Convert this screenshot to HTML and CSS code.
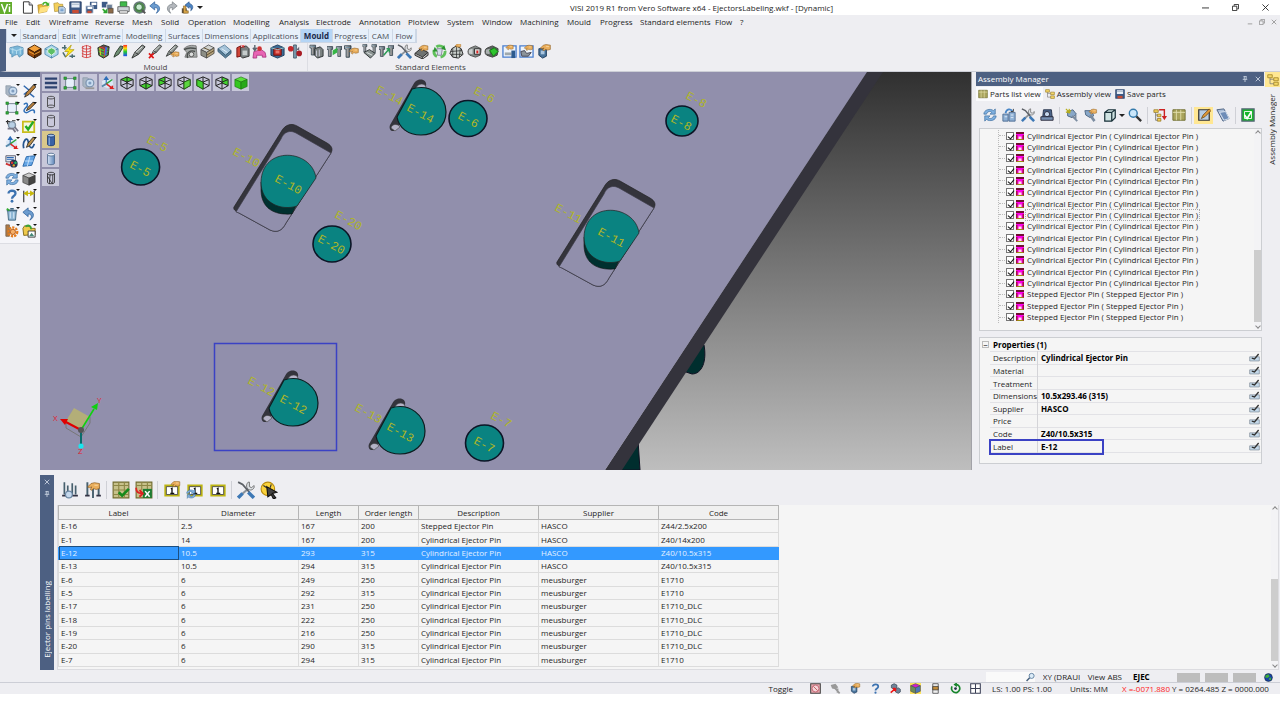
FILE: index.html
```
<!DOCTYPE html>
<html lang="en">
<head>
    <meta charset="UTF-8">
    <meta name="viewport" content="width=device-width, initial-scale=1.0">
    <title>VISI 2019 R1 - EjectorsLabeling.wkf</title>
    <link rel="stylesheet" href="styles.css">
</head>
<body>
    <svg class="sprite" aria-hidden="true">
        <defs>
            <linearGradient id="gBlue" x1="0" x2="1"><stop offset="0" stop-color="#d3e2f5"/><stop offset="1" stop-color="#5f86b8"/></linearGradient>
            <linearGradient id="gGrey" x1="0" x2="1"><stop offset="0" stop-color="#ddd"/><stop offset="1" stop-color="#555"/></linearGradient>
            <linearGradient id="gRain" x1="0" x2="0" y1="0" y2="1"><stop offset="0" stop-color="#f22"/><stop offset=".3" stop-color="#fd0"/><stop offset=".6" stop-color="#2c3"/><stop offset="1" stop-color="#24f"/></linearGradient>
        </defs>
        <!-- shared parts -->
        <symbol id="hand" viewBox="0 0 16 16"><path d="M1 7L5 3L9 2L15 3V9L11 10L8 9L6 11L4 10L6 7L3 8Z" fill="#eaae5c" stroke="#8a5a1c" stroke-width=".8"/><path d="M9 5H13" stroke="#fbe0b0"/></symbol>
        <symbol id="screw" viewBox="0 0 16 16"><path d="M4 1H12V5H10V15H6V5H4Z" fill="url(#gGrey)" stroke="#263844" stroke-width="1"/><path d="M5 3H11" stroke="#6a90a8"/></symbol>
        <symbol id="cubewire" viewBox="0 0 16 16"><path d="M8 1L15 4V11L8 15L1 11V4ZM1 4L8 7L15 4M8 7V15M8 1V8L1 11M8 8L15 11" fill="none" stroke="#222" stroke-width="1.1"/></symbol>
        <!-- title bar -->
        <symbol id="new" viewBox="0 0 16 16"><path d="M3 1H10L14 5V15H3Z" fill="#fff" stroke="#333" stroke-width="1.2"/><path d="M10 1V5H14" fill="#ccd" stroke="#333"/></symbol>
        <symbol id="open" viewBox="0 0 16 16"><path d="M1 5L6 4L7 6L13 5L12 13L2 15Z" fill="#e8b73a" stroke="#9a7213" stroke-width=".7"/><path d="M4 8L16 6L12 13L2 15Z" fill="#ffe283"/><path d="M6 4C8 0 12 0 14 3L15 1V6L10 5L12 4C10 2 9 3 8 5Z" fill="#43b02a"/></symbol>
        <symbol id="folder" viewBox="0 0 16 16"><path d="M1 3L6 2L8 4H12V12L2 13Z" fill="#f3cf5c" stroke="#a5831e" stroke-width=".7"/><path d="M7 7H13L15 9V15H7Z" fill="#cfe0f2" stroke="#456" stroke-width=".8"/><path d="M9 10H13M9 12H13" stroke="#3f78b8"/></symbol>
        <symbol id="save" viewBox="0 0 16 16"><path d="M1 1H15V15H1Z" fill="#3c5a86" stroke="#223a60"/><path d="M3 2H13V8H3Z" fill="#e8eef6"/><path d="M4 11H12V15H4Z" fill="#c84c33"/><path d="M3 4H13" stroke="#9ab"/></symbol>
        <symbol id="saveall" viewBox="0 0 16 16"><path d="M6 1H15V10H6Z" fill="#3c5a86"/><path d="M8 2H14V5H8Z" fill="#fff"/><path d="M1 6H10V15H1Z" fill="#3c5a86" stroke="#dfe6ef"/><path d="M3 7H9V10H3Z" fill="#fff"/><path d="M3 12H8V15H3Z" fill="#c84c33"/></symbol>
        <symbol id="export" viewBox="0 0 16 16"><path d="M1 1H8V8H1Z" fill="#3c5a86"/><path d="M7 4H14V11H7Z" fill="#6b7f98" stroke="#eee"/><path d="M9 9H15V15H9Z" fill="#8c6a48" stroke="#333" stroke-width=".6"/><path d="M2 10L7 14M7 10V14H3" stroke="#2fa62f" stroke-width="2" fill="none"/></symbol>
        <symbol id="printer" viewBox="0 0 16 16"><path d="M4 1H12V8H4Z" fill="#3fb94b" stroke="#24762c"/><path d="M1 7H15V13H1Z" fill="#ccd2d8" stroke="#555"/><path d="M3 12H13V15H3Z" fill="#eee" stroke="#666"/></symbol>
        <symbol id="zoomfit" viewBox="0 0 16 16"><circle cx="8" cy="8" r="7" fill="#4f8c4a" stroke="#6c7880" stroke-width="1.4"/><circle cx="7.500" cy="7.500" r="4" fill="#c8ead0" stroke="#2c5c34"/><path d="M11 11L15 15" stroke="#555" stroke-width="2.400"/></symbol>
        <symbol id="undo" viewBox="0 0 16 16"><path d="M1 6L7 1V4C13 4 16 11 9 15C12 11 11 8 7 8V11Z" fill="#6c9ccf" stroke="#31629c" stroke-width=".9"/></symbol>
        <symbol id="redo" viewBox="0 0 16 16"><path d="M15 6L9 1V4C3 4 0 11 7 15C4 11 5 8 9 8V11Z" fill="#b4b8bd" stroke="#7c8288" stroke-width=".9"/></symbol>
        <symbol id="undohouse" viewBox="0 0 16 16"><path d="M5 5L10 1V3C15 4 16 9 12 12C13 9 12 7 10 7V9Z" fill="#4d85c4" stroke="#234f86" stroke-width=".8"/><path d="M1 9H7V15H1Z" fill="#5c5040"/><path d="M3 6H6V12H9V15H3Z" fill="#d9a649" stroke="#6a4b14" stroke-width=".6"/></symbol>
        <!-- mould ribbon -->
        <symbol id="blockblue" viewBox="0 0 16 16"><path d="M1 4L9 2L15 4V11L11 14L9 11L6 12L3 14V11L1 10Z" fill="#7ab6d8" stroke="#4d88ad" stroke-width=".8"/><path d="M1 5L8 7L15 5M8 7V11M4 4V10M12 4V11" stroke="#b9dff0" fill="none"/></symbol>
        <symbol id="blockorange" viewBox="0 0 16 16"><path d="M1 5L8 1L15 5L8 9Z" fill="#f3a03a" stroke="#4a2404"/><path d="M1 5V11L8 15V9Z" fill="#a24f0c" stroke="#3a1c04"/><path d="M15 5V11L8 15V9Z" fill="#5d2c07" stroke="#3a1c04"/><path d="M2 8L8 11L14 8" stroke="#f2a63c" fill="none"/></symbol>
        <symbol id="blockgreen" viewBox="0 0 16 16"><path d="M1 5L8 1L15 5V11L8 15L1 11Z" fill="#a9d3ea" stroke="#5a93b5"/><path d="M1 5L8 9L15 5M8 9V15" stroke="#4d88ad" fill="none"/><path d="M4 6L8 4L12 6V9L8 12L4 9Z" fill="#5cbf66" stroke="#e6f6e6"/></symbol>
        <symbol id="bolt" viewBox="0 0 16 16"><path d="M4 1V6M1 4H6M12 11V15M9 13H15M2 9L5 14" stroke="#4b6c70" stroke-width="1.6"/><path d="M11 1L4 8H8L5 14L14 6H9Z" fill="#ffe818" stroke="#a89404" stroke-width=".7"/></symbol>
        <symbol id="coil" viewBox="0 0 16 16"><path d="M4 2V14M12 2V14M8 1V15" stroke="#c22" stroke-width=".8"/><path d="M3 4C6 1 10 1 13 4C10 6 6 6 3 4M3 7C6 9 10 9 13 7M3 10C6 12 10 12 13 10M3 13C6 15 10 15 13 13" stroke="#d43c3c" fill="none" stroke-width=".9"/></symbol>
        <symbol id="mesh" viewBox="0 0 16 16"><path d="M2 4L8 1L14 3L13 12L8 15L3 12Z" fill="#6d4a4c" stroke="#232"/><path d="M3 5L8 7L13 5M3 8L8 10L13 8M4 11L8 13L12 11" stroke="#3ecf3a" stroke-width="1.3" fill="none"/><path d="M4 3L9 5V14" stroke="#e8402a" fill="none"/><path d="M11 3L10 12" stroke="#4a68e0" stroke-width="2"/><path d="M4 4L5 12" stroke="#e8d22a"/></symbol>
        <symbol id="pen" viewBox="0 0 16 16"><path d="M1 15L4 9L12 1L15 3L8 11Z" fill="#8d9490" stroke="#2b2e2c"/><path d="M4 10L12 3" stroke="#e8ecea"/><path d="M4 9L8 11" stroke="#333"/></symbol>
        <symbol id="penrain" viewBox="0 0 16 16"><path d="M1 14L3 9L8 2L11 3L6 11Z" fill="#6f8f74" stroke="#2b3a2c"/><path d="M11 1H15V13H11Z" fill="url(#gRain)"/></symbol>
        <symbol id="penred" viewBox="0 0 16 16"><use href="#pen" x="2" y="0" width="14" height="13"/><path d="M1 10L6 15M6 10L1 15" stroke="#e01818" stroke-width="1.8"/></symbol>
        <symbol id="penhand" viewBox="0 0 16 16"><use href="#pen" x="0" y="0" width="15" height="14"/><use href="#hand" x="5" y="7" width="11" height="10"/></symbol>
        <symbol id="fade" viewBox="0 0 16 16"><path d="M1 5C5 1 10 1 14 2L15 14H2L4 9Z" fill="#a5a9a8" stroke="#777"/><path d="M1 6C6 3 10 4 14 5M5 15C3 9 8 6 13 8" stroke="#4c504e" stroke-width="1.5" fill="none"/><circle cx="9" cy="11" r="2.500" fill="#dcdedd" stroke="#555"/></symbol>
        <symbol id="slab" viewBox="0 0 16 16"><path d="M1 6L9 1L15 4L7 9Z" fill="#d2d4d0" stroke="#444" stroke-width=".8"/><path d="M1 6V12L7 15V9Z" fill="#8c8e86" stroke="#444" stroke-width=".8"/><path d="M15 4V10L7 15V9Z" fill="#b5a37e" stroke="#444" stroke-width=".8"/><path d="M7 12L15 7M4 4L11 7" stroke="#5d4c2c"/></symbol>
        <symbol id="slabblue" viewBox="0 0 16 16"><path d="M1 5L8 1L15 7L9 12Z" fill="#a6c4da" stroke="#49708c" stroke-width=".8"/><path d="M1 5V8L9 15L15 10V7L9 12Z" fill="#5b7f98" stroke="#31556f" stroke-width=".8"/><path d="M5 5L11 9" stroke="#e6f2fa"/></symbol>
        <symbol id="platered" viewBox="0 0 16 16"><path d="M2 4L6 2V13L2 14Z" fill="#cf4537" stroke="#711"/><path d="M6 4L12 2L15 5V13L8 15L6 13Z" fill="#777e7f" stroke="#333"/><path d="M8 7H13V12H8Z" fill="#c6cccc"/><path d="M7 1L10 4M10 1L7 4" stroke="#e22"/></symbol>
        <symbol id="pinkpart" viewBox="0 0 16 16"><path d="M2 8L10 6L14 9L15 14H11V12H5V15H1Z" fill="#e864b4" stroke="#a22c78" stroke-width=".8"/><path d="M3 1V7M1 4L3 7L5 4" stroke="#5c6670" stroke-width="1.500" fill="none"/><circle cx="8" cy="5" r="2.500" fill="#c33"/></symbol>
        <symbol id="cubered" viewBox="0 0 16 16"><path d="M8 1L15 4V12L8 15L1 12V4Z" fill="#3e6c95" stroke="#1c3c5c"/><path d="M4 5H12V12H4Z" fill="#c22d28" stroke="#6c1010"/><path d="M1 4L8 6L15 4" stroke="#9cc" fill="none"/><path d="M6 7H10V10H6Z" fill="#e8746a"/></symbol>
        <symbol id="slider" viewBox="0 0 16 16"><path d="M7 1H10V15H7Z" fill="#7d9caf" stroke="#334c5c" stroke-width=".8"/><circle cx="4" cy="5" r="3" fill="#c2282c"/><circle cx="13" cy="10" r="3" fill="#a81c24"/><path d="M10 6L13 3V7Z" fill="#667"/></symbol>
        <!-- standard elements ribbon -->
        <symbol id="screwpack" viewBox="0 0 16 16"><use href="#screw" x="-2" y="0" width="12" height="13"/><path d="M6 5L12 3L15 6V13L9 15L6 12Z" fill="#7b8281" stroke="#2c3133"/><path d="M8 7V13M11 6V13" stroke="#ccd"/></symbol>
        <symbol id="screwgreen" viewBox="0 0 16 16"><use href="#screw" x="-3" y="1" width="12" height="14"/><use href="#screw" x="7" y="1" width="12" height="14"/><path d="M6 7L11 4V9L6 12Z" fill="#35b545"/></symbol>
        <symbol id="screwhand" viewBox="0 0 16 16"><use href="#screw" x="-3" y="0" width="14" height="16"/><use href="#hand" x="4" y="3" width="13" height="11"/></symbol>
        <symbol id="screwfan" viewBox="0 0 16 16"><use href="#screw" x="-2" y="0" width="10" height="9"/><use href="#screw" x="8" y="0" width="10" height="10"/><path d="M2 9L8 6L14 10L9 15Z" fill="#8b9492" stroke="#2c3133"/><path d="M5 9L11 12" stroke="#e3e8ea"/></symbol>
        <symbol id="screwarrow" viewBox="0 0 16 16"><use href="#screw" x="-3" y="1" width="12" height="14"/><use href="#screw" x="7" y="0" width="12" height="14"/><path d="M5 12L11 5M11 5V9M11 5H8" stroke="#2c9c56" stroke-width="1.600"/></symbol>
        <symbol id="tools" viewBox="0 0 16 16"><path d="M4 12L11 6" stroke="#8b939b" stroke-width="2"/><path d="M1 15L5 11" stroke="#3d78b5" stroke-width="3"/><path d="M10 1C7 4 9 8 12 8C14 8 16 6 15 4L13 6L11 5L11 1Z" fill="#dfe3e7" stroke="#666" stroke-width=".8"/><path d="M1 1L5 3L11 10" fill="none" stroke="#5c6066" stroke-width="1.600"/><path d="M10 10L15 15" stroke="#3d78b5" stroke-width="3"/></symbol>
        <symbol id="platehand" viewBox="0 0 16 16"><path d="M1 10L7 5L15 9L9 14Z" fill="#6f7372" stroke="#222"/><path d="M1 10V12L9 16V14M15 9V12L9 16" stroke="#333" fill="#999"/><use href="#hand" x="4" y="0" width="12" height="11"/></symbol>
        <symbol id="recycle" viewBox="0 0 16 16"><circle cx="8" cy="8" r="6" fill="none" stroke="#5fc05a" stroke-width="3" stroke-dasharray="8 4"/><path d="M5 5H11L10 12H6Z" fill="#d4dcea" stroke="#889"/><path d="M13 1L15 7L10 5ZM1 8L3 3L6 8Z" fill="#2c9430"/></symbol>
        <symbol id="ball" viewBox="0 0 16 16"><path d="M3 5L8 2L13 5L15 11L10 15L4 14L1 10Z" fill="#c8ceca" stroke="#222"/><path d="M4 5V14M8 3V15M12 5L11 14M2 8L14 7M2 11L14 11" stroke="#2b2e2e" stroke-width=".8"/><use href="#hand" x="5" y="-1" width="9" height="7"/></symbol>
        <symbol id="capred" viewBox="0 0 16 16"><path d="M4 4L9 2L15 5Q15 9 14 12L9 14L3 12Q1 11 1 8Q1 5 4 4Z" fill="#818786" stroke="#555"/><path d="M2 6L6 5V11L2 10Z" fill="#ccd0d0"/><path d="M8 5H14V11H8Z" fill="#d8d8d8" stroke="#333"/><path d="M10 7H12V10H10Z" fill="#d22"/></symbol>
        <symbol id="capgreen" viewBox="0 0 16 16"><path d="M4 4L9 2L15 5Q15 9 14 12L9 14L3 12Q1 11 1 8Q1 5 4 4Z" fill="#5a605e" stroke="#444"/><path d="M2 6L6 5V11L2 10Z" fill="#aab0b0"/><path d="M6 7L11 4L15 8L10 13Z" fill="#2ec42e" stroke="#137a13"/></symbol>
        <symbol id="winpart" viewBox="0 0 16 16"><path d="M1 2H15V14H1Z" fill="#eef4fb" stroke="#4a7fd0" stroke-width="1.400"/><use href="#hand" x="2" y="0" width="12" height="9"/><path d="M3 9H10V12H3Z" fill="#9fa9ad"/><path d="M10 7H14V15H10Z" fill="#2d5b8e"/></symbol>
        <symbol id="winhand" viewBox="0 0 16 16"><path d="M1 2H15V14H1Z" fill="#eef4fb" stroke="#4a7fd0" stroke-width="1.400"/><use href="#hand" x="4" y="0" width="12" height="10"/><path d="M2 8L6 7L8 10L13 9L10 13H3Z" fill="#8c949a" stroke="#445"/></symbol>
        <symbol id="handpart" viewBox="0 0 16 16"><path d="M2 5H10V13L6 15L2 12Z" fill="#49749c" stroke="#1e3c5c"/><path d="M4 7H8V11H4Z" fill="#a9c5df"/><use href="#hand" x="2" y="-1" width="14" height="12"/></symbol>
        <!-- left and view tools -->
        <symbol id="lens" viewBox="0 0 16 16"><path d="M1 2L6 2L10 5V12L3 13L1 11Z" fill="#aab6c4" stroke="#8794a4" stroke-width=".8"/><circle cx="9" cy="8" r="4.500" fill="#c9dcf0" stroke="#7d95b0" stroke-width="1.400"/><circle cx="9" cy="8" r="1.800" fill="#7f9dc0"/><path d="M4 14H14" stroke="#999" stroke-width="2"/></symbol>
        <symbol id="pencil" viewBox="0 0 16 16"><path d="M2 2L8 7M2 12L6 9M9 11L14 15" stroke="#356bb0" stroke-width="1.600"/><path d="M3 15L5 10L13 1L16 3L8 12Z" fill="#b9803c" stroke="#222" stroke-width=".9"/></symbol>
        <symbol id="pencurve" viewBox="0 0 16 16"><path d="M2 4C6 0 8 5 4 8C0 12 4 15 8 12C12 9 15 10 14 14" fill="none" stroke="#2f6fb8" stroke-width="1.700"/><path d="M5 11L7 7L13 1L15 3L9 9Z" fill="#b9803c" stroke="#222" stroke-width=".9"/></symbol>
        <symbol id="penloop" viewBox="0 0 16 16"><path d="M2 14C0 6 6 0 7 6C8 14 12 16 14 9" fill="none" stroke="#25568f" stroke-width="2"/><path d="M5 13L7 8L13 1L15 3L9 11Z" fill="#b9904c" stroke="#222" stroke-width=".9"/></symbol>
        <symbol id="frame" viewBox="0 0 16 16"><path d="M3 3H13V13H3Z" fill="#e7f0fb" stroke="#6a7888"/><path d="M1 1H4V4H1ZM12 1H15V4H12ZM1 12H4V15H1ZM12 12H15V15H12Z" fill="#2fa838" stroke="#176a1d" stroke-width=".5"/></symbol>
        <symbol id="magn" viewBox="0 0 16 16"><path d="M1 3H6M3 1V6M8 2H12" stroke="#333" stroke-width="1.300"/><circle cx="8" cy="7" r="4" fill="#b8cfe4" stroke="#7e91a3" stroke-width="1.600"/><path d="M11 9L15 14M3 11H9L12 15" stroke="#778" stroke-width="2" fill="none"/></symbol>
        <symbol id="checky" viewBox="0 0 16 16"><path d="M1 3H14V15H1Z" fill="#f5f7e2" stroke="#c9bd1c" stroke-width="2"/><path d="M4 8L7 12L13 3" fill="none" stroke="#24aa24" stroke-width="2.800"/></symbol>
        <symbol id="axes" viewBox="0 0 16 16"><path d="M1 6L6 3L13 4L14 10L8 14L2 12Z" fill="#dbe8f6"/><path d="M6 9V2M6 1L4 4H8Z" stroke="#2f6fb8" fill="#2f6fb8" stroke-width="1.300"/><path d="M6 9L13 4" stroke="#2aa63a" stroke-width="1.500"/><path d="M6 9L13 14L10 14M13 14V11" stroke="#d22" stroke-width="1.700" fill="none"/><path d="M6 9L1 12" stroke="#58a" stroke-width="2"/></symbol>
        <symbol id="palette" viewBox="0 0 16 16"><path d="M1 2H12V9H1Z" fill="#dfe7f1" stroke="#556"/><path d="M2 4H10M2 6H10" stroke="#2e67b1" stroke-width="1.300"/><circle cx="10" cy="11" r="4.500" fill="#2a3450"/><circle cx="8" cy="10" r="1.400" fill="#d33"/><circle cx="12" cy="10" r="1.400" fill="#2b6"/><circle cx="10" cy="13" r="1.400" fill="#e8a020"/><path d="M1 11L6 13" stroke="#c33" stroke-width="2"/></symbol>
        <symbol id="sheet" viewBox="0 0 16 16"><path d="M5 3L15 2L11 13L1 14Z" fill="#66a6e6" stroke="#2563a6"/><path d="M3 8H13M9 3L6 14" stroke="#cfe6fc"/></symbol>
        <symbol id="refresh" viewBox="0 0 16 16"><path d="M1 7C1 2 8 0 12 3L14 1V7H8L10 5C8 3 5 4 4 7Z" fill="#7fb0e0" stroke="#3d6f9f" stroke-width=".8"/><path d="M15 9C15 14 8 16 4 13L2 15V9H8L6 11C8 13 11 12 12 9Z" fill="#7fb0e0" stroke="#3d6f9f" stroke-width=".8"/></symbol>
        <symbol id="cubegrey" viewBox="0 0 16 16"><path d="M1 4L8 1L15 4L8 7Z" fill="#ccc" stroke="#444" stroke-width=".8"/><path d="M1 4V12L8 15V7Z" fill="#888" stroke="#444" stroke-width=".8"/><path d="M15 4V12L8 15V7Z" fill="#444" stroke="#333" stroke-width=".8"/></symbol>
        <symbol id="help" viewBox="0 0 16 16"><path d="M4 5C4 1 12 1 12 5C12 8 8 8 8 11" fill="none" stroke="#3c72b0" stroke-width="2.600"/><circle cx="8" cy="14" r="1.600" fill="#3c72b0"/></symbol>
        <symbol id="dim" viewBox="0 0 16 16"><path d="M2 2V15M14 2V15" stroke="#333" stroke-width="1.300"/><path d="M3 5H13M3 5L6 3V7ZM13 5L10 3V7Z" stroke="#c6b70c" fill="#d8c818" stroke-width="1.500"/></symbol>
        <symbol id="trash" viewBox="0 0 16 16"><path d="M3 4H13L12 15H4Z" fill="#8fb8d6" stroke="#40657f"/><path d="M2 4H14M6 2H10" stroke="#40657f" stroke-width="1.600"/><path d="M6 6V13M10 6V13" stroke="#e2f0fa"/><path d="M2 2L5 4" stroke="#3a3" stroke-width="2"/></symbol>
        <symbol id="gear" viewBox="0 0 16 16"><path d="M1 1H5V14H1Z" fill="#b57a40" stroke="#765"/><circle cx="9" cy="9" r="5" fill="none" stroke="#e67c1c" stroke-width="2.600" stroke-dasharray="2.500 1.200"/><circle cx="9" cy="9" r="3" fill="#f5b06a" stroke="#b3520c"/></symbol>
        <symbol id="folderimg" viewBox="0 0 16 16"><path d="M1 5L3 2L9 3L10 5H15V12L2 13Z" fill="#efca4c" stroke="#7d6314"/><path d="M4 3C8 0 11 3 10 6" stroke="#3ba337" stroke-width="2" fill="none"/><path d="M7 8H15V15H7Z" fill="#fff" stroke="#333"/><path d="M8 14L11 10L14 14Z" fill="#487"/></symbol>
        <symbol id="lines" viewBox="0 0 16 16"><path d="M1 3H15M1 8H15M1 13H15" stroke="#2e4370" stroke-width="2.600"/></symbol>
        <symbol id="vtop" viewBox="0 0 16 16"><path d="M8 1L15 4L8 7L1 4Z" fill="#42d22e"/><use href="#cubewire"/></symbol>
        <symbol id="vbottom" viewBox="0 0 16 16"><path d="M8 8L15 11L8 15L1 11Z" fill="#42d22e"/><use href="#cubewire"/></symbol>
        <symbol id="vback" viewBox="0 0 16 16"><path d="M1 4L8 1V8L1 11Z" fill="#42d22e"/><use href="#cubewire"/></symbol>
        <symbol id="vright" viewBox="0 0 16 16"><use href="#cubewire"/><path d="M8 7L15 4V11L8 15Z" fill="#5cd63f" stroke="#235f14"/></symbol>
        <symbol id="vleft" viewBox="0 0 16 16"><use href="#cubewire"/><path d="M1 4L8 7V15L1 11Z" fill="#42d22e" stroke="#235f14"/></symbol>
        <symbol id="vrear" viewBox="0 0 16 16"><path d="M8 1L15 4V11L8 8Z" fill="#42d22e"/><use href="#cubewire"/></symbol>
        <symbol id="viso" viewBox="0 0 16 16"><path d="M1 4L8 1L15 4L8 7Z" fill="#5be03a" stroke="#1b7210" stroke-width=".7"/><path d="M1 4V12L8 15V7Z" fill="#36c722" stroke="#1b7210" stroke-width=".7"/><path d="M15 4V12L8 15V7Z" fill="#28a91a" stroke="#1b7210" stroke-width=".7"/></symbol>
        <symbol id="cylwire" viewBox="0 0 16 16"><path d="M4 3V13C4 15 12 15 12 13V3C12 1 4 1 4 3C4 5 12 5 12 3M4 13C4 11 12 11 12 13" fill="none" stroke="#444"/></symbol>
        <symbol id="cylline" viewBox="0 0 16 16"><path d="M4 3V13C4 15 12 15 12 13V3C12 1 4 1 4 3C4 5 12 5 12 3" fill="none" stroke="#444"/></symbol>
        <symbol id="cylblue" viewBox="0 0 16 16"><path d="M4 3V13C4 15 12 15 12 13V3Z" fill="#3a62a5" stroke="#223f73"/><ellipse cx="8" cy="3" rx="4" ry="1.600" fill="#a6c2ea" stroke="#223f73"/><path d="M6 5V14" stroke="#85a8dc" stroke-width="1.500"/></symbol>
        <symbol id="cyllight" viewBox="0 0 16 16"><path d="M4 3V13C4 15 12 15 12 13V3Z" fill="url(#gBlue)" stroke="#566f90"/><ellipse cx="8" cy="3" rx="4" ry="1.600" fill="#eef5fd" stroke="#566f90"/></symbol>
        <symbol id="cylhatch" viewBox="0 0 16 16"><path d="M4 3V13C4 15 12 15 12 13V3C12 1 4 1 4 3C4 5 12 5 12 3M7 4L6 15M10 4V15M4 6L9 14" fill="none" stroke="#222" stroke-width=".9"/></symbol>
        <!-- assembly manager -->
        <symbol id="machine" viewBox="0 0 16 16"><path d="M1 7H7V15H1ZM8 5H15V15H8Z" fill="#8fb0d4" stroke="#4c6a90"/><path d="M4 6C5 1 10 0 12 4" stroke="#4a87c8" stroke-width="2" fill="none"/><path d="M3 10H6M10 8H13M10 11H13" stroke="#e6f0fa"/><path d="M13 1V4H10" stroke="#333" fill="none"/></symbol>
        <symbol id="car" viewBox="0 0 16 16"><path d="M4 2H13L14 11H3Z" fill="#4b6489" stroke="#222f47"/><circle cx="8" cy="7" r="3" fill="#c5d7ec" stroke="#223"/><path d="M1 10H15V14H1Z" fill="#7790b2" stroke="#223"/></symbol>
        <symbol id="spring" viewBox="0 0 16 16"><path d="M3 4L9 2L13 7L8 11L3 9Z" fill="#88a7c8" stroke="#47617e"/><path d="M1 1L6 6M5 1L4 6M1 5L7 3" stroke="#b6ad18" stroke-width="1.300"/><path d="M8 9L14 15M12 8V13" stroke="#7b8ca0" stroke-width="2.200"/></symbol>
        <symbol id="wand" viewBox="0 0 16 16"><path d="M1 3L9 3L11 9L7 11L2 8Z" fill="#88a7c8" stroke="#47617e"/><path d="M7 8L12 15" stroke="#7b8ca0" stroke-width="3"/><use href="#hand" x="4" y="0" width="12" height="10"/></symbol>
        <symbol id="box" viewBox="0 0 16 16"><path d="M2 5L6 2H14V11L10 15H2ZM2 5H10V15M10 5L14 2" fill="#cfe3e2" stroke="#183038" stroke-width="1.400"/></symbol>
        <symbol id="search" viewBox="0 0 16 16"><path d="M9 9L15 15" stroke="#333" stroke-width="2.600"/><circle cx="6" cy="6" r="4.500" fill="#c9e6fa" stroke="#347aac" stroke-width="1.600"/></symbol>
        <symbol id="find" viewBox="0 0 16 16"><path d="M7 9L1 15" stroke="#45607c" stroke-width="2.600"/><circle cx="10" cy="6" r="4.500" fill="#dcecf8" stroke="#5a7a9c" stroke-width="1.600"/></symbol>
        <symbol id="treered" viewBox="0 0 16 16"><path d="M1 2H6V5H1ZM5 7H9V10H5ZM5 12H9V15H5Z" fill="#f1cf58" stroke="#8f7017" stroke-width=".8"/><path d="M3 5V14H5M3 8H5" fill="none" stroke="#777"/><path d="M7 2H13V10" stroke="#c22" stroke-width="1.600" fill="none"/><path d="M13 14L10 9H16Z" fill="#c22"/></symbol>
        <symbol id="folders" viewBox="0 0 16 16"><path d="M1 1H7V5H1ZM9 5H15V9H9ZM9 11H15V15H9Z" fill="#f5d86a" stroke="#9a7c1e"/><path d="M4 5V13H9M4 7H9" fill="none" stroke="#777"/></symbol>
        <symbol id="grid" viewBox="0 0 16 16"><path d="M1 2H15V14H1Z" fill="#a9a45c" stroke="#6d6a2c"/><path d="M1 5H15M5 2V14M10 2V14" stroke="#e3dfae"/></symbol>
        <symbol id="edit" viewBox="0 0 16 16"><path d="M2 2H14V14H2Z" fill="#b7cde3" stroke="#333" stroke-width="1.400"/><path d="M5 12L7 8L14 1L16 3L9 10Z" fill="#e09a38" stroke="#5c3b0c" stroke-width=".8"/></symbol>
        <symbol id="layers" viewBox="0 0 16 16"><path d="M1 2L9 1L15 12L8 15Z" fill="#a9bdd8" stroke="#445a7c"/><path d="M4 5L11 4L15 12L9 14Z" fill="#6e8db8" stroke="#dfe8f4"/></symbol>
        <symbol id="okbtn" viewBox="0 0 16 16"><path d="M1 1H15V15H1Z" fill="#18b52c" stroke="#567" stroke-width="1.400"/><path d="M4 4H12V12H4Z" fill="none" stroke="#fff"/><path d="M4 8L7 12L12 4" fill="none" stroke="#fff" stroke-width="2"/></symbol>
        <symbol id="part" viewBox="0 0 16 16"><path d="M0 0H16V16H0Z" fill="#f0e"/><path d="M0 0H16V4H0Z" fill="#701030"/><path d="M0 6H3V16H0ZM13 6H16V16H13Z" fill="#a31240"/><path d="M5 9H11V14H5Z" fill="#ffe0e6"/><path d="M1 14H15V16H1Z" fill="#9a8a10"/></symbol>
        <symbol id="pick" viewBox="0 0 16 12"><path d="M1 5H15V11H1Z" fill="#c4d9ea" stroke="#7c8894"/><path d="M4 7L8 8L14 1" fill="none" stroke="#333" stroke-width="2"/></symbol>
        <!-- labelling panel -->
        <symbol id="pins" viewBox="0 0 16 16"><path d="M3 1V12M6 4V12M10 2V13M13 4V12" stroke="#47606e" stroke-width="1.500"/><path d="M1 13H6M10 13H15" stroke="#334" stroke-width="1.600"/><circle cx="7" cy="12" r="3" fill="#c5d8ec" stroke="#6a86a3"/></symbol>
        <symbol id="pinshand" viewBox="0 0 16 16"><path d="M3 1V13M8 5V15M13 5V13" stroke="#47606e" stroke-width="1.700"/><path d="M1 13H5M11 13H15" stroke="#334" stroke-width="1.600"/><use href="#hand" x="1" y="0" width="15" height="12"/></symbol>
        <symbol id="gridcheck" viewBox="0 0 16 16"><path d="M1 1H15V15H1Z" fill="#c7c18a" stroke="#716c2f"/><path d="M1 4H15M6 1V15M11 1V15M1 8H15M1 12H15" stroke="#8d8746"/><path d="M6 10L9 13L15 7" stroke="#168a1c" stroke-width="2.400" fill="none"/></symbol>
        <symbol id="gridx" viewBox="0 0 16 16"><path d="M1 1H15V15H1Z" fill="#c7c18a" stroke="#716c2f"/><path d="M1 4H15M6 1V8M11 1V8" stroke="#8d8746"/><path d="M7 7H15V15H7Z" fill="#1d7c32"/><path d="M9 9L13 14M13 9L9 14" stroke="#fff" stroke-width="1.400"/><path d="M1 6C1 10 3 11 6 11M4 8L7 11L4 14" stroke="#d22" stroke-width="1.600" fill="none"/></symbol>
        <symbol id="tag" viewBox="0 0 16 16"><path d="M2 4H14V13H2Z" fill="#fff" stroke="#bdb512" stroke-width="1.600"/><path d="M3 5H13V12H3Z" fill="none" stroke="#333" stroke-width=".7"/><path d="M7 7L8 6.500V11M6.500 11H10" fill="none" stroke="#111" stroke-width="1.200"/></symbol>
        <symbol id="taghand" viewBox="0 0 16 16"><use href="#tag"/><use href="#hand" x="6" y="-1" width="10" height="9"/></symbol>
        <symbol id="tagref" viewBox="0 0 16 16"><use href="#tag"/><use href="#refresh" x="0" y="7" width="9" height="9"/></symbol>
        <symbol id="cursor" viewBox="0 0 16 16"><circle cx="7" cy="7" r="6" fill="#fbd33c" stroke="#b98c10"/><path d="M3 4L6 6M10 3L9 6" stroke="#333"/><path d="M6 5L15 10L11 11L14 15L12 16L10 12L7 14Z" fill="#444" stroke="#111"/></symbol>
        <!-- status bar -->
        <symbol id="snap" viewBox="0 0 16 16"><path d="M1 1H15V15H1Z" fill="#e7a7ad" stroke="#444" stroke-width="1.500"/><circle cx="8" cy="8" r="5" fill="#f6d4d8" stroke="#b8485a"/><path d="M5 5L11 11" stroke="#a33"/></symbol>
        <symbol id="hammer" viewBox="0 0 16 16"><path d="M1 3L8 1L12 6L8 9L3 8Z" fill="#999"/><path d="M7 7L14 15M11 8V14" stroke="#999" stroke-width="2.500"/></symbol>
        <symbol id="linkred" viewBox="0 0 16 16"><path d="M2 3L6 1L10 3V7L6 9L2 7Z" fill="#6f8499" stroke="#345"/><path d="M8 9L12 7L15 9V13L12 15L8 13Z" fill="#6f8499" stroke="#345"/><path d="M1 14L8 8M8 8V12M8 8H4" stroke="#e11" stroke-width="2.200"/></symbol>
        <symbol id="cubemag" viewBox="0 0 16 16"><path d="M1 4L8 1L15 4L8 7Z" fill="#d31ad3" stroke="#555"/><path d="M1 4V12L8 15V7Z" fill="#6a8a5a" stroke="#555"/><path d="M15 4V12L8 15V7Z" fill="#4a76b8" stroke="#555"/></symbol>
        <symbol id="stack" viewBox="0 0 16 16"><path d="M4 1H12V15H4Z" fill="#eee" stroke="#333"/><path d="M4 5H12V10H4Z" fill="#c08b3a" stroke="#333"/></symbol>
        <symbol id="spin" viewBox="0 0 16 16"><path d="M3 5A6 6 0 1 0 9 2" fill="none" stroke="#17852b" stroke-width="2.400"/><path d="M10 -1V6L5 2Z" fill="#17852b"/><circle cx="8" cy="8" r="2" fill="#234"/></symbol>
        <symbol id="cross" viewBox="0 0 16 16"><path d="M1 1H15V15H1ZM8 1V15M1 8H15" fill="#fff" stroke="#3a3f55" stroke-width="1.500"/></symbol>
        <symbol id="globe" viewBox="0 0 16 16"><circle cx="8" cy="8" r="7" fill="#1745a8" stroke="#123"/><path d="M3 4L8 2L10 6L6 9L2 8ZM9 9L13 8L12 13L9 12Z" fill="#3fae3a"/></symbol>
    </svg>

    <div class="app">
        <header class="titlebar">
            <svg class="logo" viewBox="0 0 24 24" role="img" aria-label="VISI"><path d="M0 0H24V24H0Z" fill="#63ad2c"/><path d="M3 4L9 20L15 4M19 9V20M19 4V6" fill="none" stroke="#fff" stroke-width="3"/></svg>
            <div class="quick" data-icons="new open folder save saveall export printer zoomfit undo redo undohouse"></div>
            <button class="caret" aria-label="Customize"></button>
            <div class="title">VISI 2019 R1 from Vero Software x64 - EjectorsLabeling.wkf - [Dynamic]</div>
            <div class="winbuttons">
                <button aria-label="Minimize"><svg viewBox="0 0 8 8"><path d="M0 4.500H8" /></svg></button>
                <button aria-label="Restore"><svg viewBox="0 0 8 8"><path d="M.5 2.500H5.500V7.500H.5ZM2.500 2V.5H7.500V5.500H6"/></svg></button>
                <button aria-label="Close"><svg viewBox="0 0 8 8"><path d="M.5.5L7.500 7.500M7.500.5L.5 7.500"/></svg></button>
            </div>
        </header>

        <nav class="menubar">
            <a href="#">File</a><a href="#">Edit</a><a href="#">Wireframe</a><a href="#">Reverse</a><a href="#">Mesh</a><a href="#">Solid</a><a href="#">Operation</a><a href="#">Modelling</a><a href="#">Analysis</a><a href="#">Electrode</a><a href="#">Annotation</a><a href="#">Plotview</a><a href="#">System</a><a href="#">Window</a><a href="#">Machining</a><a href="#">Mould</a><a href="#">Progress</a><a href="#">Standard elements</a><a href="#">Flow</a><a href="#">?</a>
            <div class="docbuttons">
                <button aria-label="Minimize document"><svg viewBox="0 0 8 8"><path d="M1 6.500H7"/></svg></button>
                <button aria-label="Restore document"><svg viewBox="0 0 8 8"><path d="M.5 2.500H5.500V7.500H.5ZM2.500 2V.5H7.500V5.500H6"/></svg></button>
                <button aria-label="Close document"><svg viewBox="0 0 8 8"><path d="M1 1L7 7M7 1L1 7"/></svg></button>
            </div>
        </nav>

        <section class="ribbon">
            <div class="tabs">
                <button class="caret" aria-label="More"></button><button>Standard</button><button>Edit</button><button>Wireframe</button><button>Modelling</button><button>Surfaces</button><button>Dimensions</button><button>Applications</button><button class="active">Mould</button><button>Progress</button><button>CAM</button><button>Flow</button>
            </div>
            <div class="groups">
                <div class="group mould">
                    <div class="icons" data-icons="blockblue blockorange blockgreen bolt coil mesh penrain pen penred penhand fade slab slabblue platered pinkpart cubered slider"></div>
                    <div class="caption">Mould</div>
                </div>
                <div class="group standard">
                    <div class="icons" data-icons="screwpack screwgreen screwhand screwfan screwarrow tools platehand recycle ball capred capgreen winpart winhand handpart"></div>
                    <div class="caption">Standard Elements</div>
                </div>
            </div>
        </section>

        <main class="work">
            <aside class="left">
                <div class="leftcap"></div>
                <div class="lefttools" data-icons="lens pencil frame pencurve magn checky axes penloop palette sheet refresh cubegrey help dim trash undo gear folderimg"></div>
            </aside>

            <section class="viewport">
                <svg class="scene" viewBox="40 72 931 398" preserveAspectRatio="xMinYMin slice">
                    <defs>
                        <linearGradient id="sky" x1="0" y1="0" x2="0" y2="1"><stop offset="0" stop-color="#303030"/><stop offset="1" stop-color="#bebebe"/></linearGradient>
                        <g id="pocket">
                            <path d="M-54 27L-7 -48C-3 -56 4 -57 9 -54L39 -37C44 -34 45 -31 43 -27L-2 43C-6 51 -11 53 -18 50L-49 33C-53 31 -55 29 -54 27Z" fill="#34343c" stroke="#222" stroke-width=".7"/>
                            <path d="M-52 32L-7 -41C-4 -49 3 -50 8 -47L43 -27L-2 43C-6 51 -11 53 -18 50L-49 33Z" fill="#918fac" stroke="#3c3b48" stroke-width=".7"/>
                            <path d="M-27 2V11C-26 32 -9 35 4 34L9 24Z" fill="#00302f" stroke="#111" stroke-width=".6"/>
                            <path d="M28 -2C24 -31 -26 -35 -27 2C-27 24 -6 31 9 26Z" fill="#0a8381" stroke="#222" stroke-width=".7"/>
                        </g>
                        <g id="cut">
                            <path d="M-31 14L-8 -26C-4 -35 7 -32 5 -25L-25 18C-27 22 -33 20 -31 14Z" fill="#34343c"/>
                            <path d="M-5 -23C-3 -28 4 -28 5 -24V-20H-6ZM-30 17C-29 13 -24 12 -21 16L-26 20Z" fill="#b4b2c6" stroke="#444" stroke-width=".6"/>
                            <path d="M-9 -22C10 -28 25 -14 25 1C25 15 14 24 0 24C-13 24 -22 17 -24 6Z" fill="#0a8381" stroke="#0d1d20" stroke-width="1.200"/>
                        </g>
                        <g id="round">
                            <ellipse rx="19" ry="18" fill="#0a8381" stroke="#0c1526" stroke-width="1.600"/>
                        </g>
                    </defs>
                    <rect x="600" y="72" width="371" height="398" fill="url(#sky)"/>
                    <path d="M690 345L704 345C707 361 702 374 692 374L680 370Z" fill="#002e2e" stroke="#112"/>
                    <path d="M638 440L640 470H615Z" fill="#002e2e" stroke="#112"/>
                    <path d="M867 72H883L622 470H605Z" fill="#34333c"/>
                    <path d="M40 72H867L605 470H40Z" fill="#918fac"/>
                    <use href="#round" x="140.600" y="167"/>
                    <use href="#round" x="332" y="244"/>
                    <use href="#round" x="468" y="118.500"/>
                    <use href="#round" x="484.500" y="443"/>
                    <ellipse cx="682" cy="121" rx="16" ry="15" fill="#0a8381" stroke="#0c1526" stroke-width="1.600"/>
                    <use href="#pocket" x="288" y="180"/>
                    <use href="#pocket" x="611" y="235"/>
                    <use href="#cut" x="421" y="111"/>
                    <use href="#cut" x="293" y="402"/>
                    <use href="#cut" x="400" y="430"/>
                    <g class="pinlabel">
                        <text transform="translate(146 142) rotate(28)">E-5</text>
                        <text transform="translate(129 167) rotate(28)">E-5</text>
                        <text transform="translate(232 154) rotate(28)">E-10</text>
                        <text transform="translate(274 181) rotate(28)">E-10</text>
                        <text transform="translate(334 217) rotate(28)">E-20</text>
                        <text transform="translate(317 241) rotate(28)">E-20</text>
                        <text transform="translate(375 92) rotate(28)">E-14</text>
                        <text transform="translate(406 110) rotate(28)">E-14</text>
                        <text transform="translate(473 93) rotate(28)">E-6</text>
                        <text transform="translate(457 118) rotate(28)">E-6</text>
                        <text transform="translate(685 98) rotate(28)">E-8</text>
                        <text transform="translate(670 121) rotate(28)">E-8</text>
                        <text transform="translate(554 210) rotate(28)">E-11</text>
                        <text transform="translate(597 234) rotate(28)">E-11</text>
                        <text transform="translate(247 383) rotate(28)">E-12</text>
                        <text transform="translate(279 401) rotate(28)">E-12</text>
                        <text transform="translate(354 410) rotate(28)">E-13</text>
                        <text transform="translate(386 429) rotate(28)">E-13</text>
                        <text transform="translate(490 418) rotate(28)">E-7</text>
                        <text transform="translate(473 443) rotate(28)">E-7</text>
                    </g>
                    <rect x="214.500" y="343.500" width="122" height="107" fill="none" stroke="#3b42c4" stroke-width="1.500"/>
                    <!-- axis triad -->
                    <path d="M66 422V428L81 437L90 423V417" fill="none" stroke="#777" />
                    <path d="M74 408L90 417L81 430L66 421Z" fill="#b3ae78"/>
                    <path d="M81 430L64 421" stroke="#e00000" stroke-width="2"/><path d="M60 419L68 419L65 425Z" fill="#e00000"/>
                    <path d="M81 430L94 409" stroke="#10d010" stroke-width="1.600"/><path d="M98 403L97 410L91 407Z" fill="#10d010"/>
                    <path d="M81 430V444" stroke="#0a6c6c" stroke-width="2"/><circle cx="81" cy="446" r="2.600" fill="#19e6ee"/><circle cx="81" cy="430" r="3" fill="#555"/>
                    <g class="axis"><text x="53" y="421">X</text><text x="97" y="403">Y</text><text x="78" y="454">Z</text></g>
                </svg>
                <div class="viewtools" data-icons="lines frame lens axes vtop vbottom vback vright vleft vrear viso"></div>
                <div class="shadetools" data-icons="cylwire cylline cylblue cyllight cylhatch" data-active="cylblue"></div>
            </section>

            <section class="panel">
                <div class="panelhead">
                    <span>Assembly Manager</span>
                    <button aria-label="Pin"><svg viewBox="0 0 8 8"><path d="M2 .5H6M3 .5V4M5.500.5V4M1 4.500H7M4 4.500V8"/></svg></button>
                    <button aria-label="Close panel"><svg viewBox="0 0 8 8"><path d="M1 1L7 7M7 1L1 7"/></svg></button>
                </div>
                <div class="paneltabs">
                    <button class="active"><svg><use href="#grid"/></svg>Parts list view</button>
                    <button><svg><use href="#folders"/></svg>Assembly view</button>
                    <button><svg><use href="#save"/></svg>Save parts</button>
                </div>
                <div class="paneltools">
                    <div data-icons="refresh machine tools car"></div>
                    <div class="sep" data-icons="spring wand box"></div>
                    <button class="caret" aria-label="Box options"></button>
                    <div data-icons="search"></div>
                    <div class="sep" data-icons="treered grid"></div>
                    <div class="sep" data-icons="edit layers" data-active="edit"></div>
                    <div class="sep" data-icons="okbtn"></div>
                </div>
                <div class="treebox">
                    <ul class="tree" id="parts-list"></ul>
                    <div class="scroll"><span class="up"></span><span class="thumb"></span><span class="down"></span></div>
                </div>
                <div class="props">
                    <div class="propshead"><button aria-label="Collapse">−</button>Properties (1)</div>
                    <table id="props"></table>
                    <div class="mark"></div>
                </div>
            </section>

            <aside class="side">
                <button aria-label="Tree"><svg><use href="#folders"/></svg></button>
                <span>Assembly Manager</span>
            </aside>
        </main>

        <section class="labelling">
            <div class="strip">
                <button aria-label="Close labelling"><svg viewBox="0 0 8 8"><path d="M1 1L7 7M7 1L1 7"/></svg></button>
                <button aria-label="Pin labelling"><svg viewBox="0 0 8 8"><path d="M2 .5H6M3 .5V4M5.500.5V4M1 4.500H7M4 4.500V8"/></svg></button>
                <span>Ejector pins labelling</span>
            </div>
            <div class="content">
                <div class="labeltools">
                    <div data-icons="pins pinshand"></div>
                    <div class="sep" data-icons="gridcheck gridx"></div>
                    <div class="sep" data-icons="taghand tagref tag"></div>
                    <div class="sep" data-icons="tools cursor"></div>
                </div>
                <div class="tablebox">
                    <table class="pinstable">
                        <colgroup><col class="wide"><col class="wide"><col class="narrow"><col class="narrow"><col class="wide"><col class="wide"><col class="wide"></colgroup>
                        <thead><tr><th>Label</th><th>Diameter</th><th>Length</th><th>Order length</th><th>Description</th><th>Supplier</th><th>Code</th></tr></thead>
                        <tbody id="pins-body"></tbody>
                    </table>
                    <div class="scroll"><span class="up"></span><span class="thumb"></span><span class="down"></span></div>
                </div>
            </div>
        </section>

        <footer class="status">
            <div class="statusrow first">
                <input type="search" aria-label="Search"><svg class="find"><use href="#find"/></svg>
                <span class="plane">XY (DRAUI</span>
                <span class="view">View ABS</span>
                <b>EJEC</b>
                <i></i><i></i><i></i>
                <svg class="globe"><use href="#globe"/></svg>
            </div>
            <div class="statusrow second">
                <span class="toggle">Toggle</span>
                <div class="statusicons" data-icons="snap hammer handpart help linkred cubemag stack spin cross" data-active="cubemag"></div>
                <span class="scale">LS: 1.00 PS: 1.00</span>
                <span class="units">Units: MM</span>
                <span class="coords"><em>X =-0071.880</em> Y = 0264.485 Z = 0000.000</span>
            </div>
        </footer>
    </div>
    <script src="script.js"></script>
</body>
</html>
```
FILE: styles.css
```
* {
    box-sizing: border-box;
}
body {
    margin: 0;
    padding-bottom: 26px;
    background: #fff;
    font-family: "Open Sans", "Noto Sans", sans-serif;
    font-size: 8px;
    line-height: 10px;
    color: #1e1e1e;
}
button {
    padding: 0;
    border: 0;
    background: none;
    font: inherit;
    color: inherit;
    display: flex;
    align-items: center;
    justify-content: center;
}
a {
    color: inherit;
    text-decoration: none;
}
.sprite {
    position: absolute;
    width: 0;
    height: 0;
}
.app {
    display: flex;
    flex-direction: column;
    height: calc(100vh - 26px);
    min-height: 600px;
    background: #eeeef2;
    white-space: nowrap;
}
.caret::before {
    content: "";
    border: 3px solid transparent;
    border-top-color: #222;
    border-bottom: 0;
}
.tool svg {
    display: block;
    width: 14px;
    height: 14px;
}

/* title bar and menu */
.titlebar {
    display: flex;
    align-items: center;
    height: 15px;
    background: #fff;
}
.logo {
    width: 12px;
    height: 12px;
    margin-right: 7px;
}
.quick {
    display: flex;
}
.quick .tool {
    width: 16px;
}
.quick svg {
    width: 13px;
    height: 13px;
}
.titlebar .caret {
    width: 10px;
}
.title {
    flex: 1;
    padding-left: 8px;
    text-align: center;
}
.winbuttons,
.docbuttons {
    display: flex;
}
.winbuttons button {
    width: 30px;
}
.winbuttons svg,
.docbuttons svg {
    width: 7px;
    height: 7px;
    fill: none;
    stroke: #222;
}
.menubar {
    display: grid;
    grid-template-columns: 21px 23px 46px 37px 29px 27px 45px 46px 37px 43px 49px 39px 35px 38px 47px 33px 40px 75px 25px 20px 1fr;
    align-items: center;
    height: 14px;
    padding-left: 5px;
}
.docbuttons {
    justify-content: flex-end;
}
.docbuttons button {
    width: 12px;
}
.docbuttons svg {
    width: 6px;
    height: 6px;
    stroke: #888;
}

/* ribbon */
.ribbon {
    height: 43px;
    border-left: 6px solid #4d6082;
    border-bottom: 1px solid #ccced6;
}
.tabs {
    display: grid;
    grid-template-columns: 14px 38px 21px 43px 43px 37px 48px 50px 32px 36px 24px 23px;
    width: max-content;
    height: 14px;
    background: #e7f0fa;
    border: 1px solid #ccd6e4;
    border-width: 0 1px 1px;
    color: #4a4f57;
}
.tabs button {
    border-right: 1px solid #cdd8e6;
}
.tabs .active {
    background: #b5d5f5;
    color: #1b2a4a;
    font-weight: bold;
}
.groups {
    display: flex;
    height: 28px;
}
.group {
    padding-top: 1px;
    border-right: 1px solid #dcdde3;
}
.mould {
    width: 302px;
    padding-left: 2px;
    padding-right: 4px;
}
.standard {
    width: 245px;
    border: 0;
}
.icons {
    display: flex;
}
.icons .tool {
    flex: 1;
}
.icons svg {
    width: 15px;
    height: 15px;
}
.caption {
    padding-top: 3px;
    text-align: center;
    line-height: 9px;
    color: #444;
}

/* work area */
.work {
    display: flex;
    flex: 1;
    min-height: 0;
}
.left {
    width: 40px;
}
.leftcap {
    height: 5px;
    background: #4d6082;
}
.lefttools {
    display: grid;
    grid-template-columns: 17px 17px;
    justify-content: center;
    height: 165px;
    margin-top: 2px;
    padding: 3px 0;
    background: #f5f5f9;
    border-bottom: 1px solid #dcdde3;
}
.lefttools .tool {
    position: relative;
}
.lefttools .tool::after {
    content: "";
    position: absolute;
    top: 2px;
    right: 0;
    border: 2px solid transparent;
    border-top-color: #111;
    border-bottom: 0;
}
.viewport {
    position: relative;
    flex: 1;
    min-width: 0;
    overflow: hidden;
    background: #918fac;
}
.scene {
    display: block;
    width: 100%;
    height: 100%;
}
.pinlabel {
    font-family: "Liberation Mono", monospace;
    font-size: 12px;
    fill: #b0b626;
}
.axis {
    font-size: 8px;
    fill: #e02030;
}
.viewtools,
.shadetools {
    position: absolute;
    top: 2px;
    left: 2px;
    display: flex;
    gap: 2px;
}
.shadetools {
    top: 21px;
    flex-direction: column;
}
.viewtools .tool,
.shadetools .tool {
    width: 17px;
    height: 17px;
    background: #c8c8da;
}
.shadetools .tool.active {
    background: #d9c88c;
}

/* assembly manager */
.panel {
    display: flex;
    flex-direction: column;
    width: 293px;
    padding: 0 0 6px 4px;
    border-left: 1px solid #a2a2a8;
}
.panelhead {
    display: flex;
    align-items: center;
    height: 14px;
    padding: 0 0 0 2px;
    background: #4d6082;
    color: #fff;
}
.panelhead span {
    flex: 1;
}
.panelhead button {
    width: 13px;
}
.panelhead svg,
.strip svg {
    width: 6px;
    height: 6px;
    fill: none;
    stroke: #dfe5f0;
}
.paneltabs {
    display: flex;
    height: 16px;
    padding: 1px 0;
}
.paneltabs button {
    padding: 0 2px;
    gap: 2px;
}
.paneltabs .active {
    background: #fafafc;
}
.paneltabs svg {
    width: 10px;
    height: 10px;
}
.paneltools {
    display: flex;
    align-items: center;
    height: 26px;
    padding-left: 4px;
}
.paneltools > div {
    display: flex;
}
.paneltools > div + div {
    margin-left: 3px;
}
.paneltools .tool {
    width: 19px;
    height: 17px;
}
.paneltools .tool.active {
    background: #ffe793;
}
.sep {
    padding-left: 2px;
    border-left: 1px solid #cfd0d6;
}
.treebox {
    display: flex;
    height: 203px;
    margin: 0 2px 0 3px;
    background: #f5f5f5;
    border: 1px solid #ccced2;
}
.tree {
    display: grid;
    grid-auto-rows: 1fr;
    flex: 1;
    height: 193px;
    margin: 1px 0 0 18px;
    padding: 0;
    list-style: none;
    border-left: 1px dotted #bbb;
}
.tree label {
    display: flex;
    align-items: center;
    height: 11px;
}
.tree label::before {
    content: "";
    width: 6px;
    border-top: 1px dotted #bbb;
}
.tree input {
    appearance: none;
    width: 8px;
    height: 8px;
    margin: 0 2px 0 1px;
    background: #fff;
    border: 1px solid #777;
}
.tree input:checked::before {
    content: "";
    display: block;
    width: 3px;
    height: 5px;
    margin-left: 2px;
    border: solid #111;
    border-width: 0 1px 1px 0;
    transform: rotate(40deg);
}
.tree svg {
    width: 8px;
    height: 8px;
    margin-right: 2px;
}
.tree span {
    padding: 0 1px;
}
.tree .focus {
    outline: 1px dotted #aaa;
}
.scroll {
    display: flex;
    flex-direction: column;
    align-items: center;
    justify-content: space-between;
    width: 7px;
    background: #f3f3f5;
}
.scroll .up,
.scroll .down {
    width: 4px;
    height: 4px;
    margin: 2px;
    border: solid #888;
    border-width: 1px 0 0 1px;
    transform: rotate(45deg);
}
.scroll .down {
    transform: rotate(225deg);
}
.scroll .thumb {
    width: 100%;
    height: 72px;
    margin-top: auto;
    background: #cdcdcd;
}
.props {
    position: relative;
    flex: 1;
    margin: 6px 2px 0 3px;
    background: #f5f5f5;
    border: 1px solid #ccced2;
}
.propshead {
    display: flex;
    align-items: center;
    height: 13px;
    color: #000;
    font-weight: bold;
}
.propshead button {
    width: 7px;
    height: 7px;
    margin: 0 4px 0 2px;
    border: 1px solid #bbb;
    line-height: 5px;
    font-weight: normal;
}
.props table {
    width: calc(100% - 10px);
    height: 102px;
    margin-left: 10px;
    border-collapse: collapse;
    border-top: 1px solid #e2e2e6;
}
.props tr {
    border-bottom: 1px solid #e2e2e6;
}
.props th,
.props td {
    padding: 0 3px;
    text-align: left;
    line-height: 9px;
}
.props th {
    width: 47px;
    padding-right: 0;
    font-weight: normal;
    border-right: 1px solid #d4d4d8;
}
.props td {
    color: #000;
    font-weight: bold;
}
.props .pickcell {
    width: 13px;
    padding: 0 1px;
}
.props td svg {
    display: block;
    width: 11px;
    height: 9px;
}
.mark {
    position: absolute;
    left: 9px;
    bottom: 8px;
    width: 115px;
    height: 16px;
    border: 2px solid #3b42c4;
}
.side {
    display: flex;
    flex-direction: column;
    align-items: center;
    width: 16px;
    gap: 7px;
}
.side button {
    width: 15px;
    height: 15px;
    margin-left: 1px;
    background: #ffe793;
}
.side svg {
    width: 12px;
    height: 12px;
}
.side span,
.strip span {
    writing-mode: vertical-rl;
    transform: rotate(180deg);
}

/* ejector pins labelling */
.labelling {
    display: flex;
    height: 200px;
    padding: 5px 1px 0 40px;
}
.strip {
    display: flex;
    flex-direction: column;
    align-items: center;
    width: 14px;
    padding: 3px 0 12px;
    gap: 4px;
    background: #4d6082;
    color: #fff;
}
.strip button {
    height: 8px;
}
.strip span {
    margin-top: auto;
}
.content {
    display: flex;
    flex-direction: column;
    flex: 1;
    padding-left: 3px;
}
.labeltools {
    display: flex;
    align-items: center;
    height: 30px;
    padding-left: 1px;
}
.labeltools div {
    display: flex;
}
.labeltools .tool {
    width: 23px;
}
.labeltools svg {
    width: 18px;
    height: 18px;
}
.labeltools .sep {
    margin-left: 2px;
    padding-left: 2px;
}
.tablebox {
    display: flex;
    justify-content: space-between;
    align-items: flex-start;
    flex: 1;
    background: #f5f5f5;
    border: 1px solid #dcdce0;
    border-top: 0;
}
.tablebox .scroll {
    align-self: stretch;
}
.tablebox .thumb {
    height: 82px;
}
.pinstable {
    table-layout: fixed;
    width: 721px;
    height: 162px;
    border-collapse: collapse;
}
.pinstable .wide {
    width: 120px;
}
.pinstable .narrow {
    width: 60px;
}
.pinstable th,
.pinstable td {
    padding: 0 2px;
    border: 1px solid #dcdcdc;
    text-align: left;
    line-height: 10px;
}
.pinstable th {
    height: 14px;
    font-weight: normal;
    text-align: center;
    background: #f0f0f0;
    border-color: #b5b5b5;
}
.pinstable .selected td {
    background: #3399ff;
    border-color: #3399ff;
    color: #e4f1ff;
}
.pinstable .selected td:first-child {
    outline: 1px solid #1d4f80;
    outline-offset: -1px;
}

/* status bar */
.statusrow {
    display: flex;
    align-items: center;
    justify-content: flex-end;
}
.first {
    height: 13px;
    padding-top: 2px;
    border-bottom: 1px solid #ccced6;
}
.first input {
    width: 40px;
    height: 10px;
    padding: 0;
    border: 0;
    background: #fafafa;
}
.first svg {
    width: 9px;
    height: 9px;
}
.first .find {
    height: 10px;
    background: #fafafa;
}
.plane {
    width: 37px;
    margin-left: 8px;
    overflow: hidden;
}
.view {
    margin-left: 8px;
}
.first b {
    width: 34px;
    margin: 0 10px 0 11px;
    color: #000;
}
.first i {
    width: 23px;
    height: 9px;
    margin-right: 5px;
    background: #bdbdbd;
}
.first .globe {
    margin: 0 7px 0 3px;
}
.second {
    height: 11px;
}
.toggle {
    margin-right: 12px;
}
.statusicons {
    display: flex;
}
.statusicons .tool {
    width: 20px;
    height: 11px;
}
.statusicons svg {
    width: 11px;
    height: 11px;
}
.statusicons .active svg {
    background: #ffe45c;
}
.scale {
    width: 78px;
    margin-left: 7px;
}
.units {
    width: 52px;
}
.coords {
    width: 158px;
}
.coords em {
    color: #f22;
    font-style: normal;
}
```
FILE: script.js
```
function icon(name) {
    return '<svg><use href="#' + name + '"/></svg>';
}

document.querySelectorAll('[data-icons]').forEach(box => {
    box.innerHTML = box.dataset.icons.split(' ').map(name => {
        var active = name === box.dataset.active ? ' active' : '';
        return '<button class="tool' + active + '" aria-label="' + name + '">' + icon(name) + '</button>';
    }).join('');
});

var list = document.getElementById('parts-list');
for (var i = 0; i < 17; i++) {
    var kind = i < 14 ? 'Cylindrical Ejector Pin' : 'Stepped Ejector Pin';
    list.innerHTML += '<li><label><input type="checkbox" checked>' + icon('part') +
        '<span' + (i === 7 ? ' class="focus"' : '') + '>' + kind + ' ( ' + kind + ' )</span></label></li>';
}

var props = [
    ['Description', 'Cylindrical Ejector Pin'],
    ['Material', ''],
    ['Treatment', ''],
    ['Dimensions', '10.5x293.46 (315)'],
    ['Supplier', 'HASCO'],
    ['Price', ''],
    ['Code', 'Z40/10.5x315'],
    ['Label', 'E-12']
];
document.getElementById('props').innerHTML = props.map(p =>
    '<tr><th>' + p[0] + '</th><td>' + p[1] + '</td><td class="pickcell">' + icon('pick') + '</td></tr>'
).join('');

var cyl = 'Cylindrical Ejector Pin';
var pins = [
    ['E-16', '2.5', 167, 200, 'Stepped Ejector Pin', 'HASCO', 'Z44/2.5x200'],
    ['E-1', '14', 167, 200, cyl, 'HASCO', 'Z40/14x200'],
    ['E-12', '10.5', 293, 315, cyl, 'HASCO', 'Z40/10.5x315'],
    ['E-13', '10.5', 294, 315, cyl, 'HASCO', 'Z40/10.5x315'],
    ['E-6', '6', 249, 250, cyl, 'meusburger', 'E1710'],
    ['E-5', '6', 292, 315, cyl, 'meusburger', 'E1710'],
    ['E-17', '6', 231, 250, cyl, 'meusburger', 'E1710_DLC'],
    ['E-18', '6', 222, 250, cyl, 'meusburger', 'E1710_DLC'],
    ['E-19', '6', 216, 250, cyl, 'meusburger', 'E1710_DLC'],
    ['E-20', '6', 290, 315, cyl, 'meusburger', 'E1710_DLC'],
    ['E-7', '6', 294, 315, cyl, 'meusburger', 'E1710']
];
document.getElementById('pins-body').innerHTML = pins.map(row =>
    '<tr' + (row[0] === 'E-12' ? ' class="selected"' : '') + '>' +
    row.map(v => '<td>' + v + '</td>').join('') + '</tr>'
).join('');
```
